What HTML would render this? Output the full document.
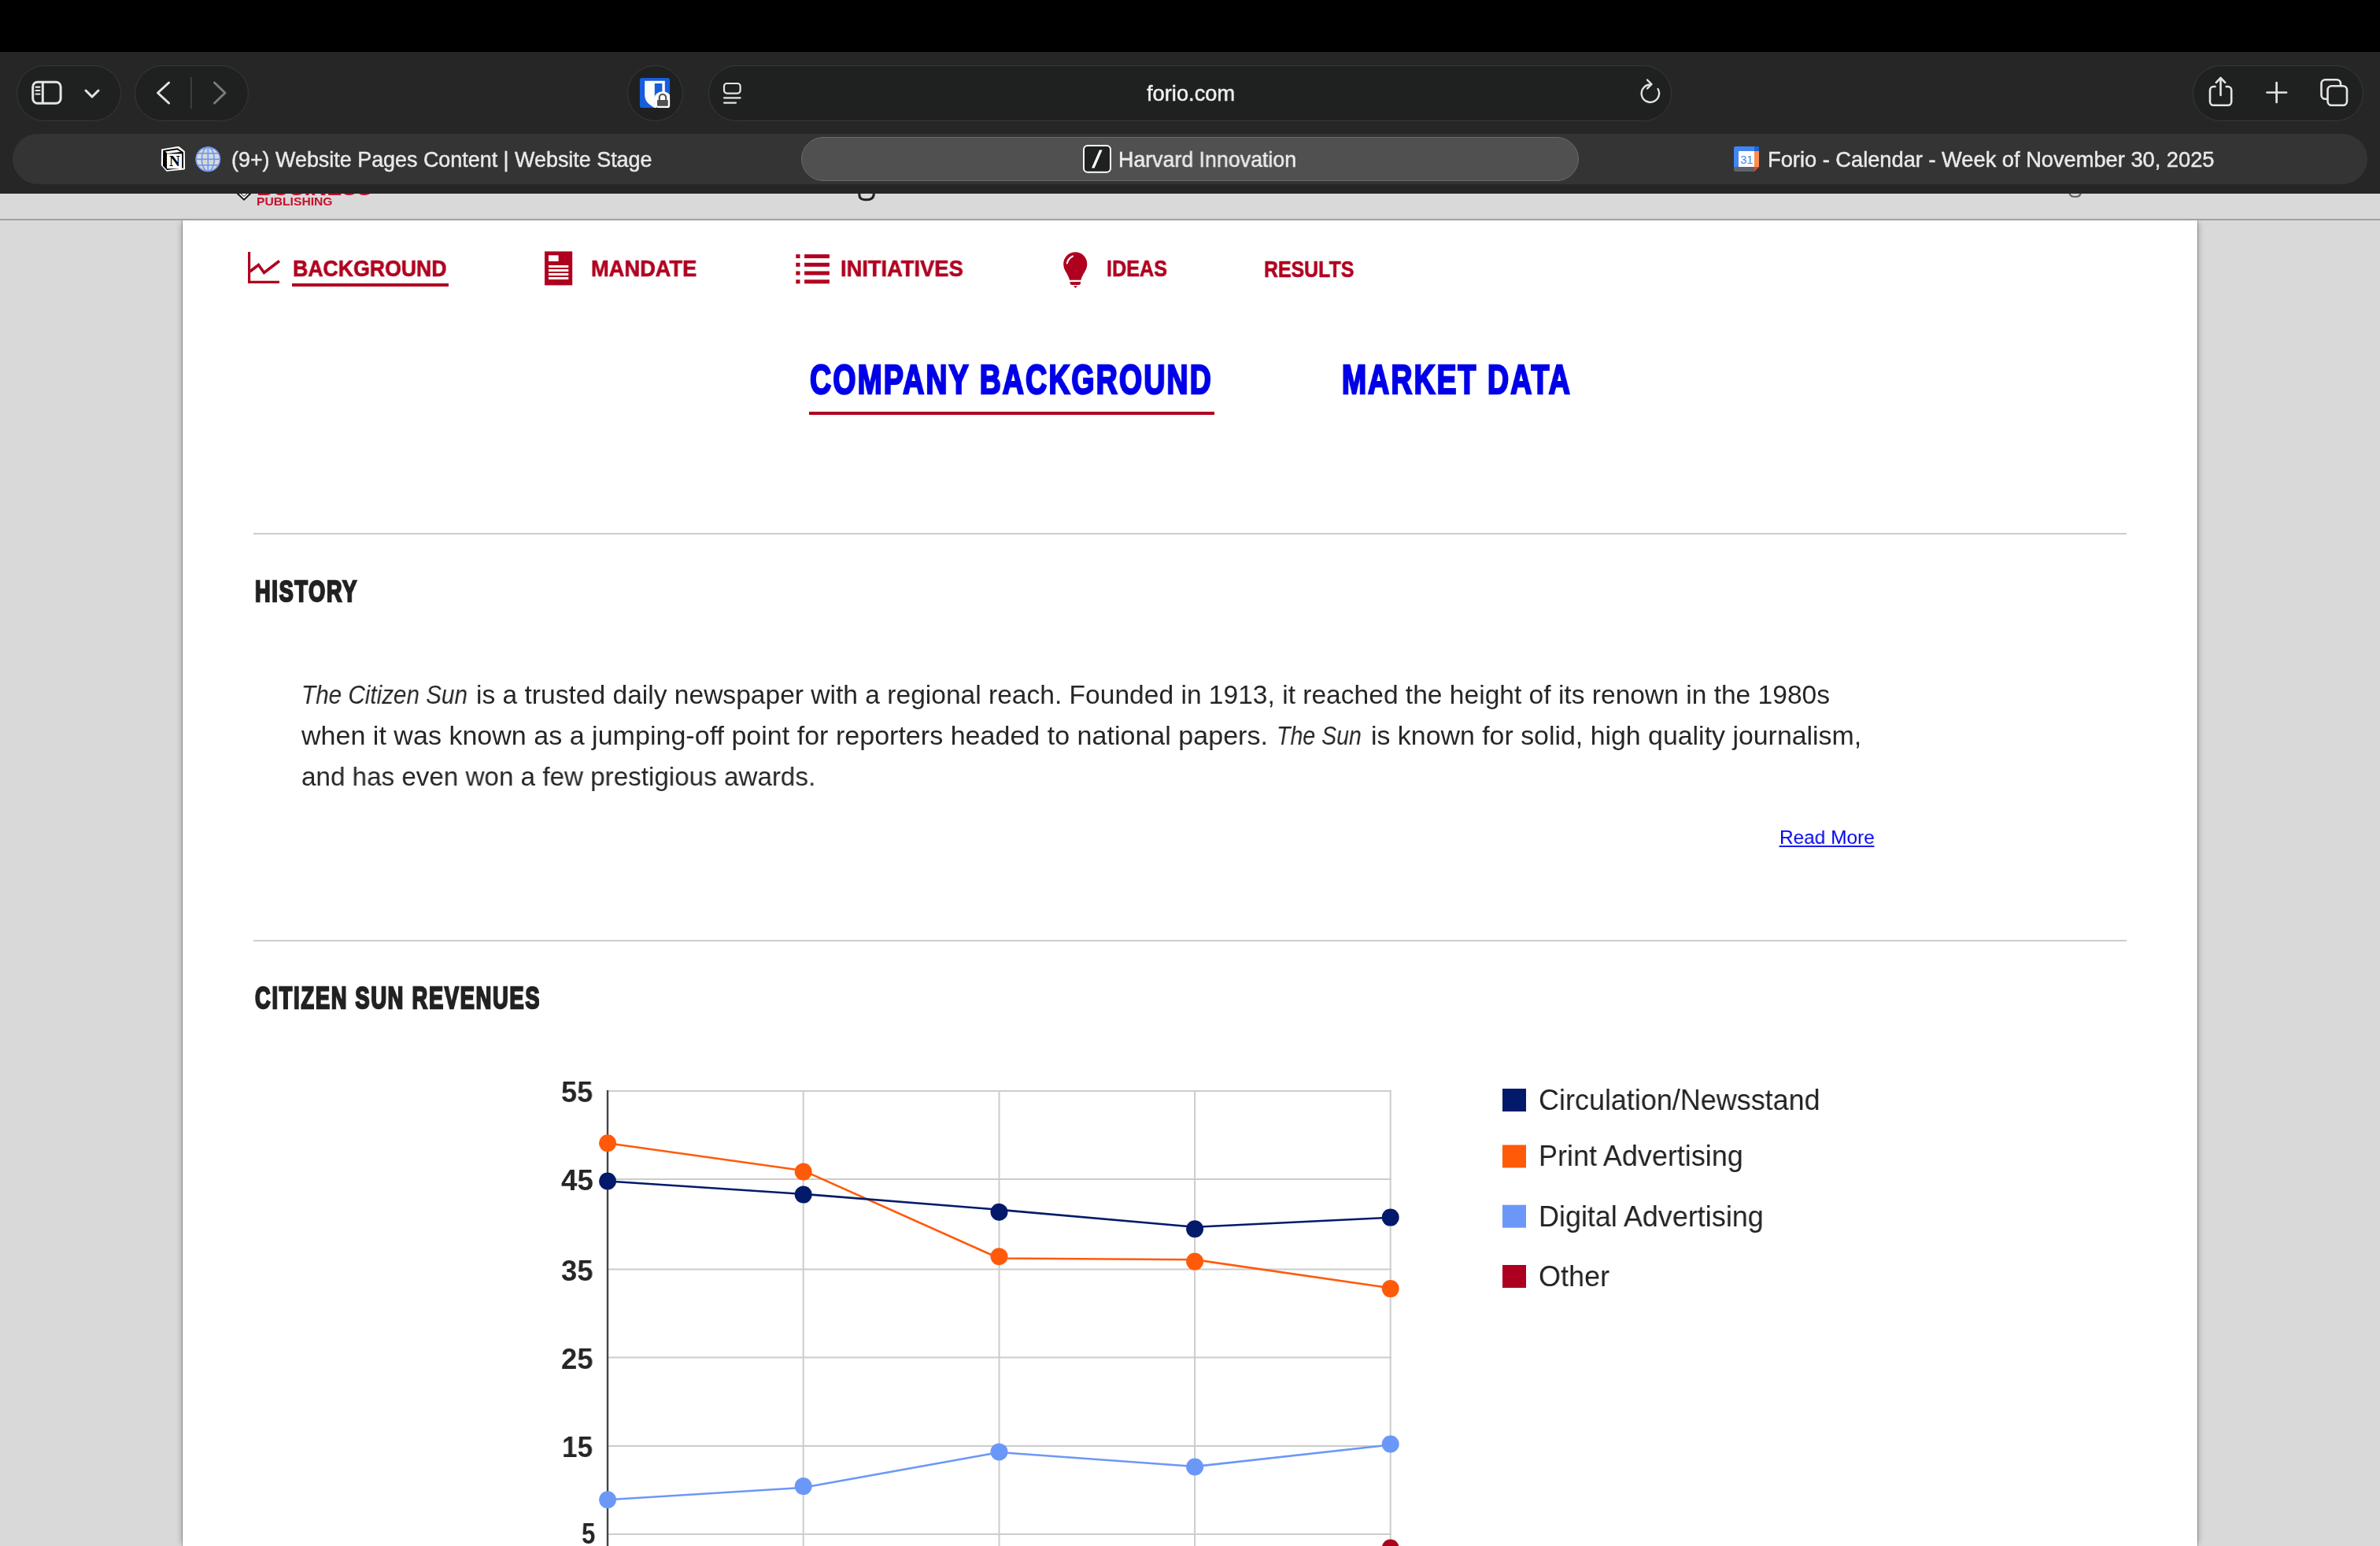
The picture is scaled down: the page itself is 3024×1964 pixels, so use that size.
<!DOCTYPE html>
<html><head><meta charset="utf-8"><title>forio.com</title>
<style>
html,body{margin:0;padding:0;overflow:hidden;}
body{width:3024px;height:1964px;overflow:hidden;position:relative;background:#d9d9d9;font-family:"Liberation Sans",sans-serif;}
.abs{position:absolute;}
.t{position:absolute;white-space:nowrap;transform-origin:0 0;will-change:transform;font-family:"Liberation Sans",sans-serif;}
#pagebg{position:absolute;left:0;top:246px;width:3024px;height:1718px;background:#d9d9d9;}
#strip-line{position:absolute;left:0;top:278px;width:3024px;height:2px;background:#9fa1a4;}
#panel{position:absolute;left:232px;top:280px;width:2560px;height:1684px;background:#fff;box-shadow:-5px 0 7px -3px rgba(0,0,0,0.22),5px 0 7px -3px rgba(0,0,0,0.22),-1px 0 0 0 rgba(0,0,0,0.25),1px 0 0 0 rgba(0,0,0,0.25);}
#chrome{position:absolute;left:0;top:0;width:3024px;height:246px;background:#262626;}
#blackbar{position:absolute;left:0;top:0;width:3024px;height:66px;background:#000;}
.pill{position:absolute;top:82.5px;height:71px;border-radius:36px;background:#1f2020;box-sizing:border-box;border:1px solid #393939;}
#tabbar{position:absolute;left:16px;top:170px;width:2992px;height:64px;border-radius:32px;background:#343434;}
#activetab{position:absolute;left:1018px;top:174px;width:988px;height:56px;border-radius:28px;background:#505050;box-sizing:border-box;border:1.5px solid #6a6a6a;}
</style></head><body>
<div id="pagebg"></div>
<div id="panel"></div>
<div class="t" style="left:325.90px;top:248.20px;font-size:14.68px;line-height:16px;height:16px;color:#c8102e;transform:scale(1.0670,1.0000);"><span style="font-weight:700">PUBLISHING</span></div>
<div class="t" style="left:325.90px;top:222.60px;font-size:27.62px;line-height:31px;height:31px;color:#c8102e;transform:scale(1.0386,1.0000);"><span style="font-weight:700">BUSINESS</span></div>
<div class="t" style="left:372.28px;top:325.00px;font-size:28.63px;line-height:32px;height:32px;color:#b0001f;transform:scale(0.9312,1.0000);-webkit-text-stroke:0.60px #b0001f;"><span style="font-weight:700">BACKGROUND</span></div>
<div class="t" style="left:750.89px;top:325.40px;font-size:28.63px;line-height:32px;height:32px;color:#b0001f;transform:scale(0.9520,1.0000);-webkit-text-stroke:0.60px #b0001f;"><span style="font-weight:700">MANDATE</span></div>
<div class="t" style="left:1067.99px;top:325.20px;font-size:28.63px;line-height:32px;height:32px;color:#b0001f;transform:scale(0.9539,1.0000);-webkit-text-stroke:0.60px #b0001f;"><span style="font-weight:700">INITIATIVES</span></div>
<div class="t" style="left:1406.26px;top:325.20px;font-size:28.63px;line-height:32px;height:32px;color:#b0001f;transform:scale(0.8785,1.0000);-webkit-text-stroke:0.60px #b0001f;"><span style="font-weight:700">IDEAS</span></div>
<div class="t" style="left:1606.26px;top:326.20px;font-size:28.63px;line-height:32px;height:32px;color:#b0001f;transform:scale(0.8690,1.0000);-webkit-text-stroke:0.60px #b0001f;"><span style="font-weight:700">RESULTS</span></div>
<div class="t" style="left:1029.35px;top:452.50px;font-size:51.45px;line-height:58px;height:58px;color:#0000e8;transform:scale(0.7275,1.0000);letter-spacing:3.00px;-webkit-text-stroke:2.60px #0000e8;"><span style="font-weight:700">COMPANY BACKGROUND</span></div>
<div class="t" style="left:1704.64px;top:452.50px;font-size:51.45px;line-height:58px;height:58px;color:#0000e8;transform:scale(0.7250,1.0000);letter-spacing:3.00px;-webkit-text-stroke:2.60px #0000e8;"><span style="font-weight:700">MARKET DATA</span></div>
<div class="t" style="left:324.36px;top:729.80px;font-size:37.65px;line-height:42px;height:42px;color:#222;transform:scale(0.7172,1.0000);letter-spacing:2.50px;-webkit-text-stroke:2.40px #222;"><span style="font-weight:700">HISTORY</span></div>
<div class="t" style="left:323.55px;top:1246.20px;font-size:38.37px;line-height:43px;height:43px;color:#222;transform:scale(0.7087,1.0000);letter-spacing:2.50px;-webkit-text-stroke:2.40px #222;"><span style="font-weight:700">CITIZEN SUN REVENUES</span></div>
<div class="t" style="left:382.80px;top:863.70px;font-size:33.43px;line-height:37px;height:37px;color:#262626;transform:scale(0.8872,1.0000);"><span style="font-style:italic">The Citizen Sun</span></div>
<div class="t" style="left:605.30px;top:863.70px;font-size:33.43px;line-height:37px;height:37px;color:#262626;transform:scale(1.0041,1.0000);">is a trusted daily newspaper with a regional reach. Founded in 1913, it reached the height of its renown in the 1980s</div>
<div class="t" style="left:382.93px;top:915.80px;font-size:33.43px;line-height:37px;height:37px;color:#262626;transform:scale(1.0189,1.0000);">when it was known as a jumping-off point for reporters headed to national papers.</div>
<div class="t" style="left:1621.80px;top:915.80px;font-size:33.43px;line-height:37px;height:37px;color:#262626;transform:scale(0.8531,1.0000);"><span style="font-style:italic">The Sun</span></div>
<div class="t" style="left:1742.00px;top:915.80px;font-size:33.43px;line-height:37px;height:37px;color:#262626;transform:scale(1.0135,1.0000);">is known for solid, high quality journalism,</div>
<div class="t" style="left:382.80px;top:967.90px;font-size:33.43px;line-height:37px;height:37px;color:#262626;transform:scale(0.9931,1.0000);">and has even won a few prestigious awards.</div>
<div class="t" style="left:2260.50px;top:1049.80px;font-size:24.71px;line-height:27px;height:27px;color:#0000ee;transform:scale(0.9878,1.0000);">Read More</div>
<div class="t" style="left:713.30px;top:1366.90px;font-size:36.66px;line-height:41px;height:41px;color:#262626;transform:scale(0.9840,1.0000);"><span style="font-weight:700">55</span></div>
<div class="t" style="left:712.60px;top:1479.20px;font-size:36.66px;line-height:41px;height:41px;color:#262626;transform:scale(1.0012,1.0000);"><span style="font-weight:700">45</span></div>
<div class="t" style="left:713.00px;top:1594.20px;font-size:36.66px;line-height:41px;height:41px;color:#262626;transform:scale(0.9914,1.0000);"><span style="font-weight:700">35</span></div>
<div class="t" style="left:713.00px;top:1706.00px;font-size:36.66px;line-height:41px;height:41px;color:#262626;transform:scale(0.9914,1.0000);"><span style="font-weight:700">25</span></div>
<div class="t" style="left:714.40px;top:1817.70px;font-size:36.66px;line-height:41px;height:41px;color:#262626;transform:scale(0.9571,1.0000);"><span style="font-weight:700">15</span></div>
<div class="t" style="left:738.50px;top:1928.30px;font-size:36.66px;line-height:41px;height:41px;color:#262626;transform:scale(0.8540,1.0000);"><span style="font-weight:700">5</span></div>
<div class="t" style="left:1954.70px;top:1376.00px;font-size:37.79px;line-height:42px;height:42px;color:#222;transform:scale(0.9515,1.0000);">Circulation/Newsstand</div>
<div class="t" style="left:1954.70px;top:1447.20px;font-size:37.79px;line-height:42px;height:42px;color:#222;transform:scale(0.9515,1.0000);">Print Advertising</div>
<div class="t" style="left:1954.70px;top:1523.90px;font-size:37.79px;line-height:42px;height:42px;color:#222;transform:scale(0.9515,1.0000);">Digital Advertising</div>
<div class="t" style="left:1954.70px;top:1600.00px;font-size:37.79px;line-height:42px;height:42px;color:#222;transform:scale(0.9515,1.0000);">Other</div>

<svg class="abs" width="3024" height="1964" viewBox="0 0 3024 1964" style="left:0;top:0">
 <!-- logo shield -->
 <path d="M300.5,246 L319.5,246 L310,255 Z" fill="#111"/>
 <path d="M303.5,246 L316.5,246 L310,252.5 Z" fill="#fff"/>
 <path d="M306,246 L310,249.5 L314,246" fill="none" stroke="#111" stroke-width="1"/>
 <!-- g descenders -->
 <path d="M1091.8,246 C1091.5,252.5 1095,253.8 1100.5,253.8 C1107,253.8 1110.3,251 1110.3,246" fill="none" stroke="#222" stroke-width="3"/>
 <path d="M2629.7,246 C2630.5,249.5 2633,250 2636.5,250 C2640,250 2643,249 2643.5,246" fill="none" stroke="#666" stroke-width="2.2"/>
 <!-- nav icons -->
 <g fill="none" stroke="#b0001f" stroke-width="3.2" stroke-linejoin="miter">
  <polyline points="316.6,320 316.6,358.3 355,358.3"/>
  <polyline points="317.5,345 328.5,336.5 335.5,346.5 355,331.5" stroke-width="3.6"/>
 </g>
 <rect x="692" y="319.4" width="35.2" height="43" fill="#b0001f"/>
 <rect x="697" y="324.3" width="12.6" height="7.6" fill="#fff"/>
 <rect x="697" y="337" width="25.3" height="3" fill="#fff"/>
 <rect x="697" y="342" width="25.3" height="3" fill="#fff"/>
 <rect x="697" y="347" width="25.3" height="3" fill="#fff"/>
 <rect x="697" y="352" width="25.3" height="3" fill="#fff"/>
 <g fill="#b0001f">
  <rect x="1011.3" y="323.1" width="5.2" height="5"/><rect x="1022.1" y="323.1" width="31.8" height="5"/>
  <rect x="1011.3" y="333.8" width="5.2" height="5"/><rect x="1022.1" y="333.8" width="31.8" height="5"/>
  <rect x="1011.3" y="344.5" width="5.2" height="5"/><rect x="1022.1" y="344.5" width="31.8" height="5"/>
  <rect x="1011.3" y="355.3" width="5.2" height="5"/><rect x="1022.1" y="355.3" width="31.8" height="5"/>
  <path d="M1366.3,320.3 C1374.8,320.3 1381.3,327 1381.3,335.5 C1381.3,343.5 1375.5,347.5 1373.5,355.7 L1359,355.7 C1357,347.5 1351.2,343.5 1351.2,335.5 C1351.2,327 1357.8,320.3 1366.3,320.3 Z"/>
  <path d="M1359.6,358 L1373,358 L1373,359.5 C1373,361 1372,362 1370.5,362 L1362,362 C1360.6,362 1359.6,361 1359.6,359.5 Z"/>
  <path d="M1364,363.2 L1369,363.2 L1366.5,365.9 Z"/>
 </g>
 <path d="M1363,325.5 C1359,327.5 1356.5,331 1355.8,334.5" fill="none" stroke="#fff" stroke-width="2" stroke-linecap="round"/>
 <!-- underlines -->
 <rect x="371" y="360" width="199" height="4" fill="#b0001f"/>
 <rect x="1028" y="523" width="515" height="4" fill="#b0001f"/>
 <!-- hr -->
 <rect x="322" y="677" width="2380" height="2" fill="#cccccc"/>
 <rect x="322" y="1194" width="2380" height="2" fill="#cccccc"/>
 <rect x="2260.5" y="1074.3" width="121" height="1.8" fill="#0000ee"/>
 <!-- chart grid -->
 <g stroke="#cccccc" stroke-width="2" fill="none">
  <line x1="772" y1="1386" x2="1767.7" y2="1386"/>
  <line x1="772" y1="1498" x2="1767.7" y2="1498"/>
  <line x1="772" y1="1612.5" x2="1767.7" y2="1612.5"/>
  <line x1="772" y1="1724.5" x2="1767.7" y2="1724.5"/>
  <line x1="772" y1="1837" x2="1767.7" y2="1837"/>
  <line x1="772" y1="1949" x2="1767.7" y2="1949"/>
  <line x1="1020.7" y1="1385" x2="1020.7" y2="1964"/>
  <line x1="1269.5" y1="1385" x2="1269.5" y2="1964"/>
  <line x1="1518.1" y1="1385" x2="1518.1" y2="1964"/>
  <line x1="1766.7" y1="1385" x2="1766.7" y2="1964"/>
 </g>
 <line x1="772" y1="1385" x2="772" y2="1964" stroke="#444" stroke-width="2.4"/>
 <g fill="none" stroke-width="2.6" stroke-linejoin="round">
  <polyline stroke="#ff5a0a" points="772,1452.3 1020.7,1487.1 1269.5,1598.5 1518.1,1600.3 1766.7,1636.2"/>
  <polyline stroke="#031a6b" points="772,1500.5 1020.7,1516.9 1269.5,1536.8 1518.1,1558.8 1766.7,1546.8"/>
  <polyline stroke="#6b98f8" points="772,1905.2 1020.7,1889.8 1269.5,1845 1518.1,1863 1766.7,1835.5"/>
 </g>
 <g fill="#ff5a0a"><circle cx="772" cy="1452.3" r="11"/><circle cx="1020.7" cy="1488.6" r="11"/><circle cx="1269.5" cy="1596.2" r="11"/><circle cx="1518.1" cy="1602.6" r="11"/><circle cx="1766.7" cy="1637.1" r="11"/></g>
 <g fill="#031a6b"><circle cx="772" cy="1500.5" r="11"/><circle cx="1020.7" cy="1517.6" r="11"/><circle cx="1269.5" cy="1539.8" r="11"/><circle cx="1518.1" cy="1561.3" r="11"/><circle cx="1766.7" cy="1546.6" r="11"/></g>
 <g fill="#6b98f8"><circle cx="772" cy="1905.2" r="11"/><circle cx="1020.7" cy="1888.1" r="11"/><circle cx="1269.5" cy="1844.4" r="11"/><circle cx="1518.1" cy="1863.5" r="11"/><circle cx="1766.7" cy="1834.5" r="11"/></g>
 <circle cx="1766.7" cy="1966.5" r="11" fill="#ad0020"/>
 <!-- legend swatches -->
 <rect x="1909" y="1383" width="30" height="29" fill="#031a6b"/>
 <rect x="1909" y="1454.5" width="30" height="29" fill="#ff5a0a"/>
 <rect x="1909" y="1530.7" width="30" height="29" fill="#6b98f8"/>
 <rect x="1909" y="1607" width="30" height="29" fill="#ad0020"/>
</svg>

<div id="strip-line"></div>
<div id="chrome">
 <div id="blackbar"></div>
 <div class="pill" style="left:21px;width:133px"></div>
 <div class="pill" style="left:170.5px;width:145px"></div>
 <div class="pill" style="left:797px;width:71px"></div>
 <div class="pill" style="left:900px;width:1224px"></div>
 <div class="pill" style="left:2786px;width:217px"></div>
 <div id="tabbar"></div>
 <div id="activetab"></div>
</div>

<svg class="abs" width="3024" height="1964" viewBox="0 0 3024 1964" style="left:0;top:0">
 <g fill="none" stroke="#e4e4e4" stroke-linecap="round" stroke-linejoin="round">
  <!-- sidebar icon -->
  <rect x="41.7" y="104.2" width="35.4" height="27" rx="6" stroke-width="3"/>
  <line x1="54.3" y1="105" x2="54.3" y2="130.5" stroke-width="3"/>
  <line x1="45.5" y1="110.6" x2="50.5" y2="110.6" stroke-width="2.2"/>
  <line x1="45.5" y1="115" x2="50.5" y2="115" stroke-width="2.2"/>
  <line x1="45.5" y1="119.5" x2="50.5" y2="119.5" stroke-width="2.2"/>
  <polyline points="109,115 117,123 125,115" stroke-width="3"/>
  <!-- back / forward -->
  <polyline points="214.5,105 200.5,118 214.5,131" stroke-width="3"/>
  <line x1="242.9" y1="98.5" x2="242.9" y2="137.5" stroke="#474747" stroke-width="1.5"/>
  <polyline points="272.5,105 286,118 272.5,131" stroke="#7b7b7b" stroke-width="3"/>
  <!-- reader -->
  <rect x="920" y="106" width="20.6" height="12.6" rx="3.5" stroke-width="2.2"/>
  <line x1="920" y1="124.3" x2="940.6" y2="124.3" stroke-width="2.2"/>
  <line x1="920" y1="130.6" x2="935" y2="130.6" stroke-width="2.2"/>
  <!-- reload -->
  <path d="M2106.5,113 A11.2,11.2 0 1 1 2097,107.5" stroke-width="2.4"/>
  <polyline points="2093,101.5 2098.5,107 2093,112.5" stroke-width="2.4"/>
  <!-- share -->
  <path d="M2814.5,110 h-2 a4.5,4.5 0 0 0 -4.5,4.5 v14.8 a4.5,4.5 0 0 0 4.5,4.5 h18.2 a4.5,4.5 0 0 0 4.5,-4.5 v-14.8 a4.5,4.5 0 0 0 -4.5,-4.5 h-2" stroke-width="2.6"/>
  <line x1="2821.5" y1="99.5" x2="2821.5" y2="121" stroke-width="2.6"/>
  <polyline points="2815.8,104.8 2821.5,99 2827.2,104.8" stroke-width="2.6"/>
  <!-- plus -->
  <line x1="2880.5" y1="117.5" x2="2905" y2="117.5" stroke-width="2.7"/>
  <line x1="2892.6" y1="105" x2="2892.6" y2="130" stroke-width="2.7"/>
  <!-- tabs -->
  <rect x="2949.5" y="101.2" width="24.5" height="24.5" rx="5" stroke-width="2.6"/>
  <rect x="2957.5" y="109.2" width="24.5" height="24.5" rx="5" stroke-width="2.6" fill="#1f2020"/>
 </g>
 <!-- bitwarden -->
 <defs><clipPath id="bwc"><rect x="812.9" y="99" width="38.2" height="38.1" rx="2.8"/></clipPath></defs>
 <rect x="812.9" y="99" width="38.2" height="38.1" rx="2.8" fill="#175ddc"/>
 <path d="M819.2,102.7 H844.8 V121 C844.8,130 838,134 832.5,137.5 C827,134 819.2,130 819.2,121 Z" fill="#fff" clip-path="url(#bwc)"/>
 <path d="M831.8,105.9 H841.4 V121 C841.4,127 836,131 831.8,133 Z" fill="#175ddc"/>
 <circle cx="842" cy="127.5" r="11.3" fill="#fff" clip-path="url(#bwc)"/>
 <rect x="842" y="127.5" width="10" height="10" fill="#fff" clip-path="url(#bwc)"/>
 <rect x="835" y="126.9" width="13.8" height="7.8" rx="1" fill="#4f4f4f"/>
 <path d="M837.8,127 V124 A4.2,4.2 0 0 1 846.2,124 V127" fill="none" stroke="#4f4f4f" stroke-width="2.1"/>
 <!-- notion -->
 <path d="M205.1,189.6 L225.8,186 Q227,185.8 228,186.5 L234.8,192.1 L235.1,214 Q235.1,215.3 234,215.4 L211.6,217.8 L204.8,210 Z" fill="#fff"/>
 <path d="M207.2,191 L225.5,188.2 L233,193.2 L233,213.5 L212,216 L207,210.5 Z" fill="#000"/>
 <path d="M210,192.6 L225.2,190.3 L229.5,193 L212.5,195 Z" fill="#fff"/>
 <rect x="212" y="195.4" width="19.2" height="18.8" fill="#fff"/>
 <text x="221.8" y="210.8" style="font-family:'Liberation Serif';font-weight:700;font-size:19px" text-anchor="middle" fill="#000">N</text>
 <!-- globe -->
 <circle cx="264.3" cy="202.3" r="15.6" fill="#d9d9d9"/>
 <g fill="none" stroke="#6a97f0" stroke-width="1.6">
  <circle cx="264.3" cy="202.3" r="15.2"/>
  <ellipse cx="264.3" cy="202.3" rx="8" ry="15.2"/>
  <line x1="264.3" y1="187" x2="264.3" y2="217.6"/>
  <line x1="249" y1="202.3" x2="279.6" y2="202.3"/>
  <line x1="251" y1="194.8" x2="277.6" y2="194.8"/>
  <line x1="251" y1="209.8" x2="277.6" y2="209.8"/>
 </g>
 <!-- harvard innovation favicon -->
 <rect x="1377" y="185" width="34" height="33.7" rx="5" fill="#1f2020" stroke="#fff" stroke-width="2"/>
 <path d="M1387,213.5 L1390.6,213.5 L1400.6,190.6 L1397,190.6 Z" fill="#fff"/>
 <!-- calendar -->
 <path d="M2205.5,186 H2233 A2,2 0 0 1 2235,188 V192 H2209 V212 H2203 V188.5 A2.5,2.5 0 0 1 2205.5,186 Z" fill="#4285f4"/>
 <rect x="2229" y="186" width="6" height="6" fill="#1967d2"/>
 <rect x="2229" y="192" width="6" height="20" fill="#fb8c52"/>
 <path d="M2203,212 H2229 V218 H2205.5 A2.5,2.5 0 0 1 2203,215.5 Z" fill="#5f6368"/>
 <path d="M2229,212 H2235 L2229,218 Z" fill="#ea4335"/>
 <rect x="2209" y="192" width="20" height="20" fill="#fff"/>
 <text x="2219.2" y="208" style="font-family:'Liberation Sans';font-size:14.5px" text-anchor="middle" fill="#4285f4">31</text>
</svg>

<div class="t" style="left:1456.92px;top:102.78px;font-size:27.30px;line-height:31px;height:31px;color:#f2f2f2;transform:scale(0.9987,1.0000);-webkit-text-stroke:0.45px #f2f2f2;">forio.com</div>
<div class="t" style="left:294.13px;top:187.68px;font-size:26.90px;line-height:30px;height:30px;color:#e9e9e9;transform:scale(1.0002,1.0000);-webkit-text-stroke:0.45px #e9e9e9;">(9+) Website Pages Content | Website Stage</div>
<div class="t" style="left:1421.22px;top:187.78px;font-size:26.90px;line-height:30px;height:30px;color:#ececec;transform:scale(0.9953,1.0000);-webkit-text-stroke:0.45px #ececec;">Harvard Innovation</div>
<div class="t" style="left:2246.23px;top:187.88px;font-size:26.90px;line-height:30px;height:30px;color:#e9e9e9;transform:scale(1.0134,1.0000);-webkit-text-stroke:0.45px #e9e9e9;">Forio - Calendar - Week of November 30, 2025</div>
</body></html>
